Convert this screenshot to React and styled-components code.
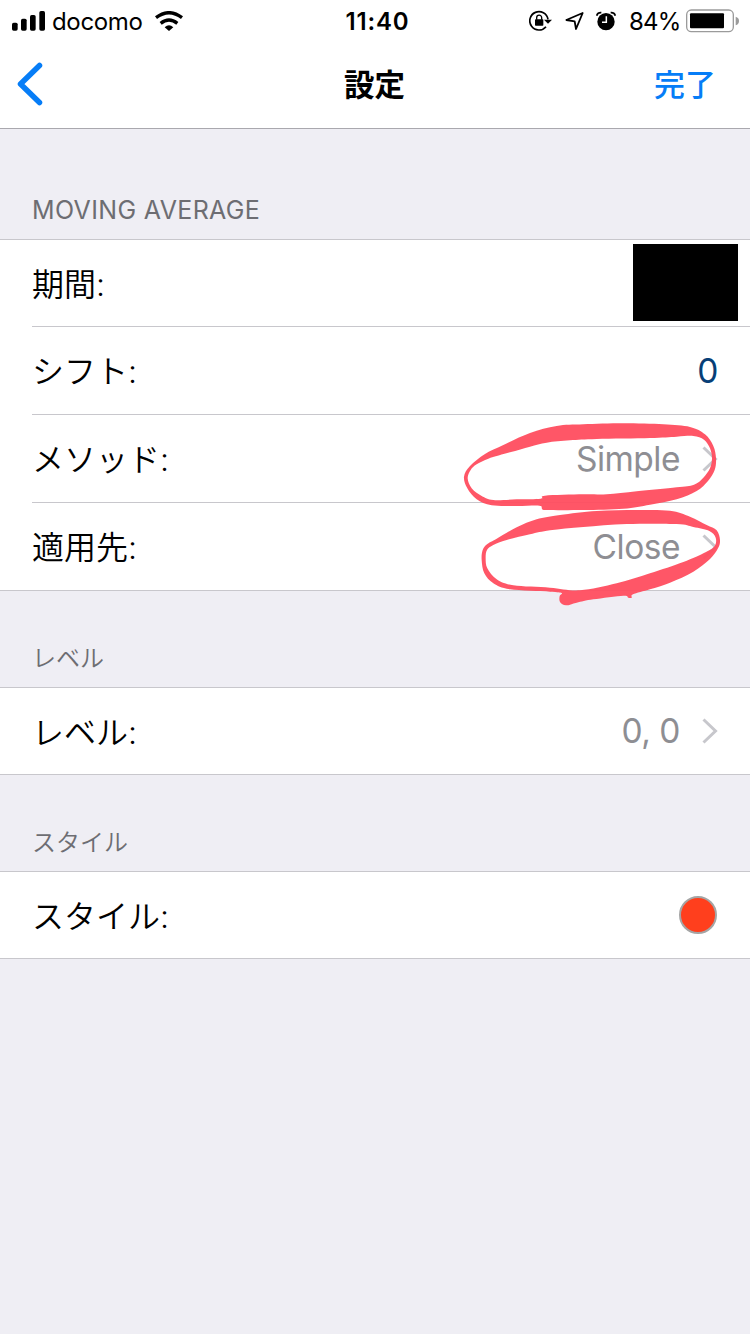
import React from 'react';
import styled, { createGlobalStyle } from 'styled-components';

const GlobalStyle = createGlobalStyle`
  * {
    box-sizing: border-box;
  }

  body {
    margin: 0;
    background-color: #efeef4;
    font-family: Inter, 'Noto Sans CJK JP', sans-serif;
  }
`;

const Screen = styled.div`
  position: relative;
  display: flex;
  flex-direction: column;
  width: 750px;
  height: 1334px;
  overflow: hidden;
  background-color: #efeef4;
`;

const Header = styled.header`
  height: 129px;
  background-color: #fff;
  border-bottom: 1px solid #a9a8ae;
`;

const StatusBar = styled.div`
  display: grid;
  grid-template-columns: 1fr auto 1fr;
  align-items: center;
  height: 40px;
  padding: 0 11px 0 12px;
  font-size: 24px;
  line-height: 38px;
  color: #000;

  svg {
    display: block;
    flex: none;
  }
`;

const StatusGroup = styled.div`
  display: flex;
  align-items: center;
  justify-content: ${({ $end }) => ($end ? 'flex-end' : 'flex-start')};
`;

const Carrier = styled.span`
  width: 91px;
  margin: 0 12px 0 6px;
  padding-top: 2px;
  letter-spacing: -0.35px;
`;

const Time = styled.span`
  padding: 3px 0 0 4px;
  font-weight: 600;
  letter-spacing: 0.8px;
`;

const Battery = styled.span`
  width: 51px;
  margin: 0 6px 0 13px;
  padding-top: 2px;
  letter-spacing: -0.85px;
`;

const NavBar = styled.nav`
  display: grid;
  grid-template-columns: 1fr auto 1fr;
  align-items: center;
  height: 88px;
  padding: 0 34px 0 17px;
`;

const Title = styled.h1`
  margin: 0 0 0 16px;
  padding-top: 1px;
  font-size: 30.5px;
  font-weight: 700;
  line-height: 44px;
`;

const NavButton = styled.button`
  display: flex;
  justify-self: ${({ $end }) => ($end ? 'end' : 'start')};
  padding: ${({ $end }) => ($end ? '2px 0 0' : 0)};
  border: 0;
  background: none;
  font-family: inherit;
  font-size: 31px;
  font-weight: 500;
  line-height: 44px;
  color: #067df7;
`;

const SectionTitle = styled.h2`
  display: flex;
  align-items: flex-end;
  height: ${({ $first }) => ($first ? 110 : 96)}px;
  margin: 0;
  padding: 0 32px ${({ $first }) => ($first ? 13 : 12)}px;
  font-size: ${({ $first }) => ($first ? 25 : 24)}px;
  font-weight: ${({ $first }) => ($first ? 380 : 350)};
  line-height: 32px;
  letter-spacing: ${({ $first }) => ($first ? '0.35px' : '0')};
  color: #6d6d72;
`;

const Group = styled.div`
  padding-left: 32px;
  background-color: #fff;
  border-top: 1px solid #c8c7cc;
  border-bottom: 1px solid #c8c7cc;
`;

const Row = styled.div`
  display: flex;
  align-items: center;
  justify-content: space-between;
  height: ${({ $short }) => ($short ? 86 : 87)}px;
  padding-right: ${({ $inset }) => $inset || 32}px;

  & + & {
    border-top: 1px solid #c8c7cc;
    height: 88px;
  }
`;

const Label = styled.span`
  padding-top: 3px;
  font-size: 32px;
  font-weight: 350;
  line-height: 44px;
  color: #000;
`;

const Value = styled.span`
  display: flex;
  align-items: center;
  font-size: 33.5px;
  font-weight: 380;
  line-height: 44px;
  letter-spacing: -0.5px;
  color: ${({ $editable }) => ($editable ? '#073f77' : '#8e8e93')};

  svg {
    margin-left: 22px;
  }
`;

const Redacted = styled.div`
  width: 105px;
  height: 77px;
  margin-bottom: 1px;
  background-color: #000;
`;

const Swatch = styled.span`
  width: 38px;
  height: 38px;
  border: 2px solid #a5a5a5;
  border-radius: 50%;
  background-color: #ff3f1d;
`;

const Marker = styled.svg`
  position: absolute;
  top: 410px;
  left: 450px;
  pointer-events: none;
`;

const Disclosure = () => (
  <svg width="16" height="26" viewBox="0 0 16 26" fill="none" stroke="#c7c7cc" strokeWidth="3">
    <path d="M1.5 1.5 13.5 13 1.5 24.5" />
  </svg>
);

const SignalIcon = () => (
  <svg width="34" height="20" viewBox="36 30 102 60">
    <rect x="36" y="65" width="17" height="24" rx="5" />
    <rect x="63" y="53" width="17" height="36" rx="5" />
    <rect x="90" y="42" width="17" height="47" rx="5" />
    <rect x="118" y="30" width="17" height="59" rx="5" />
  </svg>
);

const WifiIcon = () => (
  <svg width="28" height="20" viewBox="465 30 84 60" fill="none" stroke="#000" strokeWidth="10">
    <path d="M468 50Q507 20 546 50" />
    <path d="M482 67Q507 47 532 67" />
    <path d="M494 79Q507 67 520 79L507 90Z" fill="#000" stroke="none" />
  </svg>
);

const RotationLockIcon = () => (
  <svg width="23" height="21" viewBox="86 28 69 63" fill="none" stroke="#000">
    <path d="M137 78A27.500 27.500 0 1 1 143 56" strokeWidth="5" />
    <path d="M131 57H155L143 69Z" fill="#000" stroke="none" />
    <rect x="104" y="56" width="25" height="19" rx="2" fill="#000" stroke="none" />
    <path d="M109 57V51A7.500 7.500 0 0 1 124 51V57" strokeWidth="4" />
  </svg>
);

const LocationIcon = () => (
  <svg width="19" height="20" viewBox="194 33 57 60" fill="none" stroke="#000" strokeWidth="5.500">
    <path d="M247 39 198 60 223 64 227 87Z" strokeLinejoin="round" />
  </svg>
);

const AlarmIcon = () => (
  <svg width="20" height="20" viewBox="290 30 60 60" fill="none" stroke="#000" strokeWidth="5">
    <circle cx="320" cy="62" r="26" fill="#000" stroke="none" />
    <path d="M292 44Q295 34 306 35M334 35Q345 34 348 44" />
    <path d="M321 46V64H308" stroke="#fff" strokeWidth="4.500" />
  </svg>
);

const BatteryIcon = () => (
  <svg width="53" height="24" viewBox="558 26 159 72">
    <rect x="560" y="29" width="140" height="65" rx="14" fill="none" stroke="#9b9b9b" strokeWidth="4" />
    <rect x="570" y="39" width="102" height="45" rx="3" />
    <path d="M707 49Q717 52 717 62T707 75Z" fill="#9b9b9b" />
  </svg>
);

const BackIcon = () => (
  <svg
    width="26"
    height="44"
    viewBox="0 0 26 44"
    fill="none"
    stroke="#067df7"
    strokeWidth="5.500"
    strokeLinecap="round"
    strokeLinejoin="round"
  >
    <path d="M22.500 3.500 3.500 22 22.500 40.500" />
  </svg>
);

// closed Catmull-Rom curve through the points
const smooth = (points) => {
  const n = points.length;
  const at = (i) => points[(i + n) % n];
  const segments = points.map(([x, y], i) => {
    const prev = at(i - 1);
    const next = at(i + 1);
    const after = at(i + 2);
    const c1 = [x + (next[0] - prev[0]) / 6, y + (next[1] - prev[1]) / 6];
    const c2 = [next[0] - (after[0] - x) / 6, next[1] - (after[1] - y) / 6];
    return `C${c1} ${c2} ${next}`;
  });
  return `M${points[0]}${segments.join('')}Z`;
};

const circles = [
  {
    id: 'method',
    outer: [
      [42, 200], [60, 168], [105, 132], [160, 105], [240, 69], [320, 48], [400, 43], [520, 40],
      [640, 43], [720, 51], [765, 73], [790, 108], [798, 145], [794, 180], [774, 213], [740, 243],
      [680, 268], [600, 284], [520, 296], [400, 300], [290, 300], [276, 296], [268, 287],
      [200, 288], [125, 286], [80, 268], [52, 235],
    ],
    inner: [
      [53, 205], [62, 180], [80, 163], [115, 146], [180, 127], [240, 110], [290, 98], [360, 91],
      [440, 87], [600, 84], [680, 80], [730, 78], [762, 89], [780, 115], [786, 145], [780, 175],
      [760, 203], [732, 224], [680, 232], [560, 244], [470, 253], [400, 253], [285, 257],
      [272, 266], [200, 268], [130, 270], [95, 258], [65, 235],
    ],
  },
  {
    id: 'apply',
    outer: [
      [95, 450], [98, 420], [112, 402], [140, 386], [200, 352], [260, 328], [330, 315],
      [440, 303], [560, 300], [660, 302], [720, 320], [770, 345], [800, 361], [810, 390],
      [804, 415], [780, 447], [730, 485], [660, 518], [600, 538], [549, 553], [545, 563],
      [535, 563], [520, 557], [430, 568], [380, 578], [348, 586], [330, 576], [329, 558],
      [335, 549], [300, 545], [180, 538], [130, 520], [103, 490],
    ],
    inner: [
      [107, 445], [111, 420], [130, 405], [170, 390], [240, 373], [300, 361], [400, 351],
      [530, 342], [680, 342], [730, 351], [778, 363], [797, 383], [794, 408], [768, 426],
      [700, 456], [600, 490], [500, 520], [390, 541], [300, 533], [190, 526], [140, 508],
      [112, 475],
    ],
  },
];

const App = () => (
  <Screen>
    <GlobalStyle />
    <Header>
      <StatusBar>
        <StatusGroup>
          <SignalIcon />
          <Carrier>docomo</Carrier>
          <WifiIcon />
        </StatusGroup>
        <Time>11:40</Time>
        <StatusGroup $end>
          <RotationLockIcon />
          <span style={{ width: 13 }} />
          <LocationIcon />
          <span style={{ width: 12 }} />
          <AlarmIcon />
          <Battery>84%</Battery>
          <BatteryIcon />
        </StatusGroup>
      </StatusBar>
      <NavBar>
        <NavButton aria-label="戻る">
          <BackIcon />
        </NavButton>
        <Title>設定</Title>
        <NavButton $end>完了</NavButton>
      </NavBar>
    </Header>

    <SectionTitle $first>MOVING AVERAGE</SectionTitle>
    <Group>
      <Row $short $inset={12}>
        <Label>期間:</Label>
        <Redacted />
      </Row>
      <Row>
        <Label>シフト:</Label>
        <Value $editable>0</Value>
      </Row>
      <Row>
        <Label>メソッド:</Label>
        <Value>
          Simple
          <Disclosure />
        </Value>
      </Row>
      <Row>
        <Label>適用先:</Label>
        <Value>
          Close
          <Disclosure />
        </Value>
      </Row>
    </Group>

    <SectionTitle>レベル</SectionTitle>
    <Group>
      <Row $short>
        <Label>レベル:</Label>
        <Value>
          0, 0
          <Disclosure />
        </Value>
      </Row>
    </Group>

    <SectionTitle>スタイル</SectionTitle>
    <Group>
      <Row $short $inset={33}>
        <Label>スタイル:</Label>
        <Swatch />
      </Row>
    </Group>

    <Marker width="300" height="210" viewBox="0 0 900 630" fill="#ff4d5f" fillOpacity="0.95">
      {circles.map(({ id, outer, inner }) => (
        <path key={id} d={smooth(outer) + smooth(inner)} fillRule="evenodd" />
      ))}
    </Marker>
  </Screen>
);

export default App;
